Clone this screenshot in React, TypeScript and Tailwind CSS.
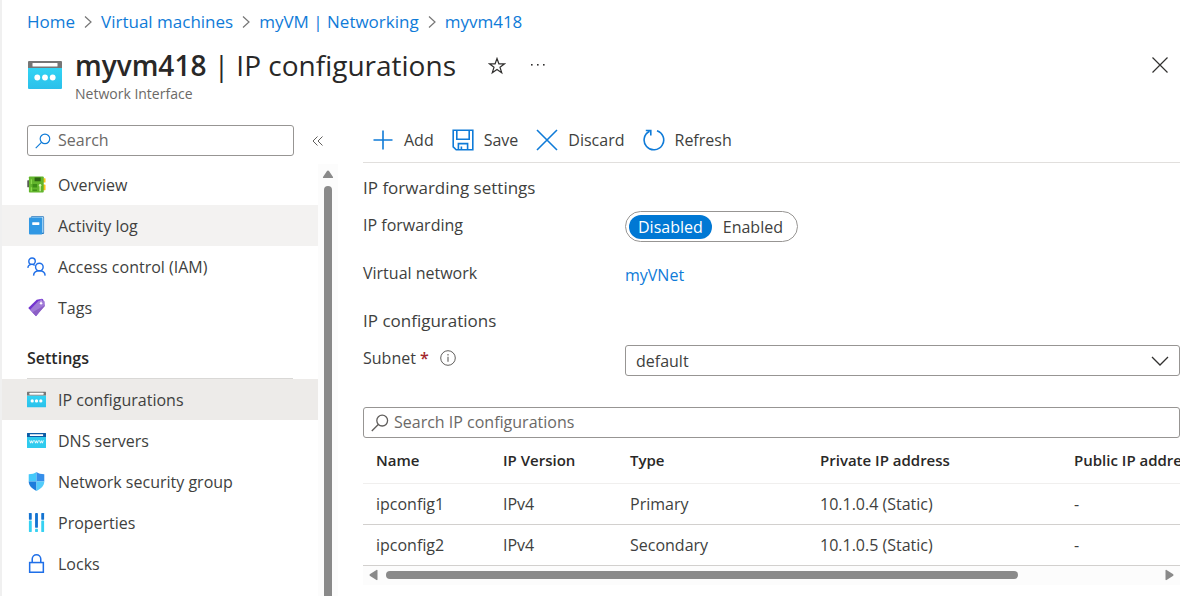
import type { ReactNode } from "react";

const crumbs = ["Home", "Virtual machines", "myVM | Networking", "myvm418"];

function InterfaceIcon({ className }: { className: string }) {
  return (
    <svg viewBox="0 0 34 28" className={className} aria-hidden="true">
      <defs>
        <linearGradient id="nicBody" x1="0" y1="0" x2="0" y2="1">
          <stop offset="0" stopColor="#32d4f5" />
          <stop offset="1" stopColor="#2bc0ea" />
        </linearGradient>
      </defs>
      <path d="M0 7h34v20a1 1 0 0 1-1 1H1a1 1 0 0 1-1-1z" fill="url(#nicBody)" />
      <path d="M1 0h32a1 1 0 0 1 1 1v6H0V1a1 1 0 0 1 1-1z" fill="#767676" />
      <rect x="4.5" y="2" width="25" height="3.6" rx="0.6" fill="#fff" />
      <circle cx="9.3" cy="16.5" r="2.9" fill="#fff" />
      <circle cx="17" cy="16.5" r="2.9" fill="#fff" />
      <circle cx="24.7" cy="16.5" r="2.9" fill="#fff" />
    </svg>
  );
}

function SearchIcon({ className }: { className: string }) {
  return (
    <svg viewBox="0 0 18 18" className={className} fill="none" stroke="currentColor" strokeWidth="1.3" aria-hidden="true">
      <circle cx="11.2" cy="6.6" r="5.4" />
      <path d="M7.3 10.5 0.8 17" />
    </svg>
  );
}

const sideIcon = "h-[19px] w-[19px] shrink-0";

const generalItems: { label: string; icon: ReactNode; row: string }[] = [
  {
    label: "Overview",
    row: "",
    icon: (
      <svg viewBox="0 0 20 20" className={sideIcon} aria-hidden="true">
        <rect x="0.3" y="5.5" width="2.2" height="7.5" rx="0.6" fill="#555" />
        <rect x="16.5" y="3.5" width="3" height="4.5" rx="0.5" fill="#fcc419" />
        <rect x="16.5" y="10" width="3" height="6" rx="0.5" fill="#fcc419" />
        <rect x="2" y="1.5" width="15.6" height="17" rx="0.8" fill="#62b52c" />
        <rect x="8" y="2.6" width="6.4" height="4" fill="#2c6412" />
        <path d="M4.600 4.500v5M4.600 13v4" stroke="#8edb4f" strokeWidth="1.2" fill="none" />
        <rect x="5.800" y="9.500" width="4.800" height="3.600" fill="#3c8c17" />
        <path d="M6 16h4.500" stroke="#3c8c17" strokeWidth="1.400" />
        <path d="M13.800 17v-5.500" stroke="#d6f5b0" strokeWidth="1.300" />
        <circle cx="13.800" cy="10.800" r="1.300" fill="#d6f5b0" />
      </svg>
    ),
  },
  {
    label: "Activity log",
    row: "bg-[#f3f2f1]",
    icon: (
      <svg viewBox="0 0 20 20" className={sideIcon} aria-hidden="true">
        <path d="M4.500 0.300h12.300a1.200 1.200 0 0 1 1.200 1.200v16.300a1.200 1.200 0 0 1-1.200 1.200H3.500z" fill="#2878be" />
        <path d="M4.500 1h12.200a.7.700 0 0 1 .6.700v15.900h-2z" fill="#b5dcf7" />
        <path d="M3.300 1.700h11.900a.8.800 0 0 1 .8.800v16.200a.8.800 0 0 1-.8.800H3.300a1.200 1.200 0 0 1-1.200-1.200V2.900a1.200 1.200 0 0 1 1.200-1.200z" fill="#3098e4" />
        <rect x="5.500" y="6.600" width="7.500" height="2.800" rx="0.400" fill="#fff" />
      </svg>
    ),
  },
  {
    label: "Access control (IAM)",
    row: "",
    icon: (
      <svg viewBox="0 0 20 20" className={sideIcon} fill="none" stroke="#1f6fe8" strokeWidth="1.500" aria-hidden="true">
        <circle cx="5.300" cy="4.400" r="3.400" />
        <path d="M0.900 11.500C1.200 9 2.900 7.800 5.200 7.800c1.200 0 2.100.3 2.900 1" />
        <circle cx="13" cy="10.500" r="4" />
        <path d="M6.900 19.600c.2-3.200 2.800-5.100 6.100-5.100s5.900 1.900 6.100 5.100" />
      </svg>
    ),
  },
  {
    label: "Tags",
    row: "",
    icon: (
      <svg viewBox="0 0 20 20" className={sideIcon} aria-hidden="true">
        <path d="M10.200 1.800 15.800 0.800l1.200.900 1.200 5.500-8.700 12L1.300 10.500z" fill="#7334cf" />
        <path d="M3.300 12.400 12.200 3l5-.3 1.400 1 .2 4.500L9.500 19z" fill="#a07ad6" />
        <path d="M5.800 15 18.800 7.500v.9L9.500 19z" fill="#8c5fc6" />
        <circle cx="14.800" cy="5.600" r="1.300" fill="#fff" />
        <path d="M14.800 5.400V1.600" stroke="#d9c6f5" strokeWidth="0.900" />
      </svg>
    ),
  },
];

const settingsItems: { label: string; icon: ReactNode; row: string }[] = [
  { label: "IP configurations", row: "bg-[#edebe9]", icon: <InterfaceIcon className={sideIcon} /> },
  {
    label: "DNS servers",
    row: "",
    icon: (
      <svg viewBox="0 0 20 20" className={sideIcon} aria-hidden="true">
        <rect x="0" y="2" width="20" height="16" rx="0.600" fill="#2fcbee" />
        <path d="M.6 2h18.800a.6.600 0 0 1 .6.600v3.800H0V2.600A.6.600 0 0 1 .6 2z" fill="#0d5ba5" />
        <rect x="3" y="3.300" width="14" height="2" rx="0.300" fill="#fff" />
        <path
          d="m2.800 9.800 1 3 1-2.600 1 2.600 1-3m1.200 0 1 3 1-2.600 1 2.600 1-3m1.200 0 1 3 1-2.600 1 2.600 1-3"
          fill="none"
          stroke="#fff"
          strokeWidth="0.900"
        />
      </svg>
    ),
  },
  {
    label: "Network security group",
    row: "",
    icon: (
      <svg viewBox="0 0 20 20" className={sideIcon} aria-hidden="true">
        <path d="M10 0C8 1.700 5 2.200 1.800 2.300V10H10z" fill="#45c9fa" />
        <path d="M10 0c2 1.700 5 2.200 8.200 2.300V10H10z" fill="#358eea" />
        <path d="M1.800 10H10v10C5 17.500 2 14.500 1.800 10z" fill="#1c7cdc" />
        <path d="M18.200 10H10v10c5-2.500 8-5.500 8.200-10z" fill="#52ccfa" />
      </svg>
    ),
  },
  {
    label: "Properties",
    row: "",
    icon: (
      <svg viewBox="0 0 20 20" className={sideIcon} aria-hidden="true">
        <g fill="#1373d1">
          <rect x="2" y="0" width="3" height="7" rx="0.500" />
          <rect x="8.500" y="0" width="3" height="15.500" rx="0.500" />
          <rect x="15" y="0" width="3" height="7" rx="0.500" />
        </g>
        <g fill="#35d1f2">
          <rect x="2" y="8" width="3" height="12" rx="0.500" />
          <rect x="8.500" y="16.500" width="3" height="3.500" rx="0.500" />
          <rect x="15" y="8" width="3" height="12" rx="0.500" />
        </g>
      </svg>
    ),
  },
  {
    label: "Locks",
    row: "",
    icon: (
      <svg viewBox="0 0 20 20" className={sideIcon} fill="none" stroke="#1f6fe8" strokeWidth="1.600" aria-hidden="true">
        <rect x="2.800" y="9" width="14.400" height="10.200" />
        <path d="M5.500 9V5.300a4.500 4.500 0 0 1 9 0V9" />
      </svg>
    ),
  },
];

const toolIcon = "h-[22px] w-[22px] shrink-0";

const commands: { label: string; icon: ReactNode }[] = [
  { label: "Add", icon: <path d="M11 1.500v19M1.500 11h19" /> },
  {
    label: "Save",
    icon: (
      <g>
        <path d="M1.200 1.200h19.600v19.600H4.200l-3-3z" />
        <path d="M4.800 1.200v9h12.400v-9M6.400 20.800v-6.200h9.200v6.200M9.400 20.800v-3.200" />
      </g>
    ),
  },
  { label: "Discard", icon: <path d="m1 1 20 20M21 1 1 21" /> },
  {
    label: "Refresh",
    icon: (
      <g>
        <path d="M14 1.700a9.800 9.800 0 1 1-7.400.5" />
        <path d="M2.800 1.500h5v5" />
      </g>
    ),
  },
];

const columns = [
  { label: "Name", width: "w-[140px]" },
  { label: "IP Version", width: "w-[127px]" },
  { label: "Type", width: "w-[190px]" },
  { label: "Private IP address", width: "w-[254px]" },
  { label: "Public IP address", width: "w-[286px]" },
];

const rows = [
  ["ipconfig1", "IPv4", "Primary", "10.1.0.4 (Static)", "-"],
  ["ipconfig2", "IPv4", "Secondary", "10.1.0.5 (Static)", "-"],
];

function NavList({ items }: { items: typeof generalItems }) {
  return (
    <ul>
      {items.map((item) => (
        <li key={item.label}>
          <a href="#" className={`flex h-[41px] items-center gap-3 pl-[25px] ${item.row}`}>
            {item.icon}
            {item.label}
          </a>
        </li>
      ))}
    </ul>
  );
}

export default function App() {
  return (
    <div className="flex min-h-screen flex-col border-l-2 border-[#f0f0f0] bg-white font-['Open_Sans','Noto_Sans',sans-serif] text-base leading-6 text-[#403f3e]">
      <nav aria-label="Breadcrumb" className="pt-[10px] pl-[25px]">
        <ol className="flex items-center text-[17px] text-[#0f7bd8]">
          {crumbs.map((crumb, i) => (
            <li key={crumb} className="flex items-center">
              {i > 0 && (
                <svg viewBox="0 0 8 12" className="mx-[9px] h-3 w-2" fill="none" stroke="#767676" strokeWidth="1.200" aria-hidden="true">
                  <path d="m1 0.500 6 5.500-6 5.500" />
                </svg>
              )}
              <a href="#">{crumb}</a>
            </li>
          ))}
        </ol>
      </nav>

      <header className="flex items-start pt-3 pr-8 pl-[25px]">
        <InterfaceIcon className="mt-[15px] mr-3 h-7 w-9" />
        <div>
          <h1 className="text-[28px] leading-[38px] text-[#292827]">
            <span className="font-semibold">myvm418</span> | IP configurations
          </h1>
          <p className="text-sm leading-5 text-[#6b6967]">Network Interface</p>
        </div>
        <button type="button" aria-label="Add to favorites" className="mt-[11px] ml-8">
          <svg viewBox="0 0 18 18" className="h-[18px] w-[18px]" fill="none" stroke="#323130" strokeWidth="1.200" aria-hidden="true">
            <path d="m9 1.500 1.900 5.300h5.700l-4.600 3.400 1.700 5.500L9 12.400l-4.700 3.300L6 10.200 1.400 6.800h5.700z" />
          </svg>
        </button>
        <button type="button" aria-label="More" className="mt-[11px] ml-6">
          <svg viewBox="0 0 16 18" className="h-[18px] w-4" fill="#323130" aria-hidden="true">
            <rect x="1" y="7" width="1.600" height="1.600" />
            <rect x="7" y="7" width="1.600" height="1.600" />
            <rect x="13" y="7" width="1.600" height="1.600" />
          </svg>
        </button>
        <button type="button" aria-label="Close" className="mt-[11px] ml-auto">
          <svg viewBox="0 0 16 16" className="h-4 w-4" fill="none" stroke="#323130" strokeWidth="1.200" aria-hidden="true">
            <path d="m0.500 0.500 15 15M15.500 0.500l-15 15" />
          </svg>
        </button>
      </header>

      <div className="flex flex-1 pt-[21px]">
        <aside className="flex w-[336px] shrink-0 flex-col">
          <div className="flex items-center pl-[25px]">
            <label className="flex h-[31px] w-[267px] items-center gap-[7px] rounded-[3px] border border-[#979593] px-[7px]">
              <SearchIcon className="h-4 w-4 shrink-0 text-[#0f7bd8]" />
              <input type="search" aria-label="Search menu" placeholder="Search" className="w-full min-w-0 pb-[2px] outline-none placeholder:text-[#6b6967]" />
            </label>
            <button type="button" aria-label="Collapse menu" className="ml-[18px]">
              <svg viewBox="0 0 12 10" className="h-[10px] w-3" fill="none" stroke="#605e5c" strokeWidth="1" aria-hidden="true">
                <path d="M5.500 0.500 1 5l4.500 4.500M10.500 0.500 6 5l4.500 4.500" />
              </svg>
            </button>
          </div>
          <div className="mt-2 flex flex-1">
            <nav aria-label="Resource menu" className="min-w-0 flex-1">
              <NavList items={generalItems} />
              <h2 className="mx-[25px] flex h-[51px] items-center border-b border-[#d9d8d6] pt-[10px] font-semibold text-[#292827]">Settings</h2>
              <NavList items={settingsItems} />
            </nav>
            <div className="flex w-5 flex-col items-center bg-[#fcfcfc] pt-[6px]">
              <svg viewBox="0 0 12 8" className="h-2 w-3" fill="#8a8a8a" aria-hidden="true">
                <path d="M6 0.500c.5 0 .8.200 1 .600L11 7c.2.500 0 1-.6 1H1.600C1 8 .8 7.500 1 7l4-5.900c.2-.400.500-.600 1-.600z" />
              </svg>
              <div className="mt-2 w-2 flex-1 rounded-t-full bg-[#8a8a8a]" />
            </div>
          </div>
        </aside>

        <main className="min-w-0 flex-1 pr-5 pl-[25px]">
          <div role="toolbar" aria-label="Commands" className="flex h-[38px] items-start gap-[18px] border-b border-[#e1dfdd] pl-[9px]">
            {commands.map((command) => (
              <button key={command.label} type="button" className="flex h-[29px] items-center gap-[10px]">
                <svg viewBox="0 0 22 22" className={toolIcon} fill="none" stroke="#0f7bd8" strokeWidth="1.600" aria-hidden="true">
                  {command.icon}
                </svg>
                {command.label}
              </button>
            ))}
          </div>

          <h2 className="mt-[13px] text-[17px]">IP forwarding settings</h2>
          <div className="mt-[11px] grid grid-cols-[262px_1fr] items-start">
            <span id="forwarding" className="pt-[2px]">IP forwarding</span>
            <div role="radiogroup" aria-labelledby="forwarding" className="flex h-[31px] items-center justify-self-start rounded-full border border-[#979593] p-[3px]">
              <label className="flex h-6 items-center rounded-full bg-[#0078d4] px-[9px] text-white">
                <input type="radio" name="forwarding" defaultChecked className="h-0 w-0 appearance-none" />
                Disabled
              </label>
              <label className="flex h-6 items-center px-[11px]">
                <input type="radio" name="forwarding" className="h-0 w-0 appearance-none" />
                Enabled
              </label>
            </div>
          </div>
          <div className="mt-[19px] grid grid-cols-[262px_1fr] items-start">
            <span>Virtual network</span>
            <a href="#" className="pt-[2px] text-[#0f7bd8]">myVNet</a>
          </div>

          <h2 className="mt-[22px] text-[17px]">IP configurations</h2>
          <div className="mt-3 grid grid-cols-[262px_1fr] items-start">
            <div className="flex items-center pt-px">
              <label htmlFor="subnet">
                Subnet <span className="font-semibold text-[#a4262c]">*</span>
              </label>
              <svg viewBox="0 0 16 16" className="ml-[11px] h-4 w-4" fill="none" stroke="#605e5c" aria-hidden="true">
                <circle cx="8" cy="8" r="7.300" strokeWidth="1" />
                <path d="M8 6.800v5M8 4v1.400" strokeWidth="1.100" />
              </svg>
            </div>
            <div className="grid items-center">
              <select id="subnet" className="col-start-1 row-start-1 h-[31px] w-full appearance-none rounded-[3px] border border-[#979593] bg-white px-[10px]">
                <option>default</option>
              </select>
              <svg viewBox="0 0 18 10" className="pointer-events-none col-start-1 row-start-1 mr-[11px] h-[10px] w-[18px] justify-self-end" fill="none" stroke="#323130" strokeWidth="1.300" aria-hidden="true">
                <path d="m1 1 8 8 8-8" />
              </svg>
            </div>
          </div>

          <label className="mt-[31px] flex h-[31px] items-center gap-[5px] rounded-[3px] border border-[#979593] px-[7px]">
            <SearchIcon className="h-[18px] w-[18px] shrink-0 text-[#605e5c]" />
            <input type="search" aria-label="Search IP configurations" placeholder="Search IP configurations" className="w-full min-w-0 pb-[2px] outline-none placeholder:text-[#6b6967]" />
          </label>

          <div className="overflow-x-auto [scrollbar-width:none]">
            <table className="w-[997px] table-fixed border-collapse text-left">
              <thead>
                <tr className="h-[45px] border-b border-[#f0efee] text-[15px] text-[#292827]">
                  {columns.map((column, i) => (
                    <th key={column.label} scope="col" className={`${column.width} ${i === 0 ? "pl-[13px]" : ""} font-semibold`}>
                      {column.label}
                    </th>
                  ))}
                </tr>
              </thead>
              <tbody>
                {rows.map((row) => (
                  <tr key={row[0]} className="h-[41px] border-b border-[#d2d0ce]">
                    {row.map((cell, i) => (
                      <td key={columns[i].label} className={i === 0 ? "pl-[13px]" : ""}>
                        {cell}
                      </td>
                    ))}
                  </tr>
                ))}
              </tbody>
            </table>
          </div>
          <div className="flex h-[19px] items-center gap-2 bg-[#fcfcfc] px-[6px]">
            <svg viewBox="0 0 9 12" className="h-3 w-[9px]" fill="#8a8a8a" aria-hidden="true">
              <path d="M0.500 6c0-.4.200-.7.600-1L7.500.900C8 .600 8.500.800 8.500 1.500v9c0 .700-.5.900-1 .600L1.100 7c-.4-.300-.6-.6-.6-1z" />
            </svg>
            <div className="flex-1">
              <div className="h-2 w-[82%] rounded-full bg-[#8a8a8a]" />
            </div>
            <svg viewBox="0 0 9 12" className="h-3 w-[9px]" fill="#8a8a8a" aria-hidden="true">
              <path d="M8.500 6c0-.4-.2-.7-.6-1L1.500.900C1 .600.500.800.500 1.500v9c0 .700.500.900 1 .600L7.900 7c.4-.300.6-.6.6-1z" />
            </svg>
          </div>
        </main>
      </div>
    </div>
  );
}
